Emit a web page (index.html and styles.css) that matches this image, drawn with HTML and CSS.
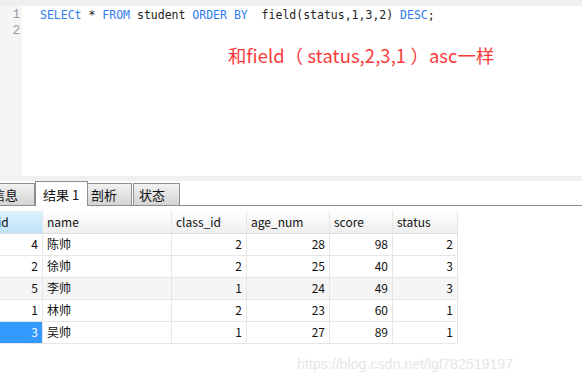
FILE: index.html
```html
<!DOCTYPE html>
<html lang="zh">
<head>
  <meta charset="UTF-8">
  <title>查询</title>
  <link rel="stylesheet" href="styles.css">
</head>
<body>

  <div class="editor">
    <div class="gutter">
      <div>1</div>
      <div>2</div>
    </div>
    <div class="code">
      <div class="line"><span class="kw">SELECt</span> * <span class="kw">FROM</span> student <span class="kw">ORDER</span> <span class="kw">BY</span>  field(status,1,3,2) <span class="kw">DESC</span>;</div>
      <div class="note">和field（ status,2,3,1 ）asc一样</div>
    </div>
  </div>

  <div class="tabs">
    <div class="tab first">信息</div>
    <div class="tab active">结果 1</div>
    <div class="tab joined">剖析</div>
    <div class="tab last">状态</div>
  </div>

  <div class="result">
    <table class="grid">
      <tr>
        <th class="c-id sel-head">id</th>
        <th class="c-name">name</th>
        <th class="c-class">class_id</th>
        <th class="c-age">age_num</th>
        <th class="c-score">score</th>
        <th class="c-status">status</th>
      </tr>
      <tr><td>4</td><td class="txt">陈帅</td><td>2</td><td>28</td><td>98</td><td>2</td></tr>
      <tr><td>2</td><td class="txt">徐帅</td><td>2</td><td>25</td><td>40</td><td>3</td></tr>
      <tr class="alt"><td>5</td><td class="txt">李帅</td><td>1</td><td>24</td><td>49</td><td>3</td></tr>
      <tr><td>1</td><td class="txt">林帅</td><td>2</td><td>23</td><td>60</td><td>1</td></tr>
      <tr><td class="sel">3</td><td class="txt">吴帅</td><td>1</td><td>27</td><td>89</td><td>1</td></tr>
    </table>
    <div class="mark">https://blog.csdn.net/lgl782519197</div>
  </div>

</body>
</html>
```

FILE: styles.css
```css
body {
  margin: 0;
  width: 582px;
  height: 386px;
  overflow: hidden;
  background-color: white;
  font-family: "Noto Sans CJK SC", sans-serif;
}

.editor {
  display: flex;
  height: 170px;
  border-top: 6px solid #efefef;
  border-bottom: 5px solid #f0f0f0;
}

.gutter {
  width: 22px;
  background-color: #f5f5f5;
  color: #999999;
  font-family: "Liberation Mono", monospace;
  font-size: 12px;
  line-height: 16px;
  text-align: right;
  padding-top: 1px;
}

.gutter div {
  padding-right: 2px;
}

.code {
  flex: 1;
  padding: 1px 0 0 18px;
}

.line {
  font-family: "DejaVu Sans Mono", monospace;
  font-size: 11.5px;
  line-height: 16px;
  color: #222222;
  white-space: pre;
}

.kw {
  color: #2f7cf0;
}

.note {
  margin: 19px 0 0 188px;
  color: #fb3b3b;
  font-size: 18.4px;
  letter-spacing: 0.1px;
  line-height: 26px;
  white-space: pre;
}

.tabs {
  display: flex;
  align-items: flex-end;
  height: 24px;
  border-bottom: 1px solid #8e8e8e;
  font-size: 13px;
}

.tab {
  box-sizing: border-box;
  height: 22px;
  line-height: 21px;
  border: 1px solid #8e8e8e;
  border-bottom: none;
  background: linear-gradient(#f2f2f2, #d4d4d4);
  color: #111111;
}

.tab.first {
  width: 49px;
  margin-left: -14px;
  padding-left: 5px;
}

.tab.active {
  width: 53px;
  height: 25px;
  line-height: 25px;
  margin-bottom: -1px;
  padding-left: 7px;
  background: white;
}

.tab.joined {
  width: 44px;
  border-left: none;
  padding-left: 3px;
}

.tab.last {
  width: 47px;
  margin-left: 1px;
  padding-left: 5px;
}

.result {
  padding-top: 5px;
}

.grid {
  border-collapse: collapse;
  margin-left: -6px;
  font-size: 12px;
  color: #111111;
}

.grid tr {
  height: 22px;
}

.grid th,
.grid td {
  padding: 0 4px;
  line-height: 16px;
  border: 1px solid #e6e6e6;
  border-top: none;
  border-left: none;
  text-align: right;
  font-weight: normal;
}

.grid th {
  text-align: left;
  background: linear-gradient(white, #eeeeee);
  border-bottom: 1px solid #dedede;
}

.grid td.txt {
  text-align: left;
}

.c-id { width: 40px; }
.c-name { width: 120px; }
.c-class { width: 66px; }
.c-age { width: 74px; }
.c-score { width: 54px; }
.c-status { width: 56px; }

.grid th.sel-head {
  background: linear-gradient(#def3fd, #bfe4fa);
}

.grid tr.alt td {
  background-color: #f5f5f5;
}

.grid td.sel {
  background-color: #3399ff;
  color: white;
}

.mark {
  margin: 12px 0 0 297px;
  font-family: "Liberation Sans", sans-serif;
  font-size: 14.2px;
  color: #e6e6e6;
}
```
